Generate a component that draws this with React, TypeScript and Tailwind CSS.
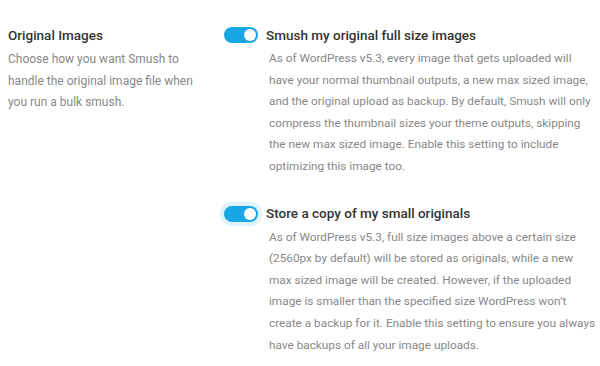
import { useState } from "react";

type ToggleProps = {
    checked: boolean;
    focused?: boolean;
    onChange: () => void;
};

const Toggle = ({ checked, focused, onChange }: ToggleProps) => {
    return (
        <button
            type="button"
            onClick={onChange}
            className={`relative shrink-0 w-[34px] h-[16px] rounded-full ${
                checked ? "bg-[#17a8e3]" : "bg-[#e6e6e6]"
            } ${focused ? "ring-[4px] ring-[#dff3fc]" : ""}`}
        >
            <span
                className={`absolute top-[2px] w-[12px] h-[12px] rounded-full bg-white ${
                    checked ? "left-[20px]" : "left-[2px]"
                }`}
            />
        </button>
    );
};

type OptionProps = {
    title: string;
    lines: string[];
    focused?: boolean;
};

const Option = ({ title, lines, focused }: OptionProps) => {
    const [on, setOn] = useState(true);
    return (
        <div>
            <div className="flex items-center h-[22px]">
                <Toggle checked={on} focused={focused} onChange={() => setOn(!on)} />
                <span className="ml-[8px] text-[13.5px] font-medium text-[#333333]">
                    {title}
                </span>
            </div>
            <p className="mt-[2px] ml-[45px] text-[11.8px] leading-[21.6px] text-[#888888] whitespace-nowrap">
                {lines.map((line, i) => (
                    <span key={i} className="block">
                        {line}
                    </span>
                ))}
            </p>
        </div>
    );
};

export default function App() {
    return (
        <div
            className="flex bg-white w-[600px] h-[366px] pt-[24px] pl-[8px] overflow-hidden"
            style={{ fontFamily: "Roboto, 'Liberation Sans', sans-serif" }}
        >
            <div className="w-[216px] shrink-0">
                <p className="text-[13.5px] leading-[22px] font-medium text-[#333333]">
                    Original Images
                </p>
                <p className="mt-[3px] w-[192px] text-[12px] leading-[21.6px] text-[#888888]">
                    Choose how you want Smush to handle the original image file when
                    you run a bulk smush.
                </p>
            </div>
            <div className="flex-1 flex flex-col gap-[25px]">
                <Option
                    title="Smush my original full size images"
                    lines={[
                        "As of WordPress v5.3, every image that gets uploaded will",
                        "have your normal thumbnail outputs, a new max sized image,",
                        "and the original upload as backup. By default, Smush will only",
                        "compress the thumbnail sizes your theme outputs, skipping",
                        "the new max sized image. Enable this setting to include",
                        "optimizing this image too.",
                    ]}
                />
                <Option
                    focused
                    title="Store a copy of my small originals"
                    lines={[
                        "As of WordPress v5.3, full size images above a certain size",
                        "(2560px by default) will be stored as originals, while a new",
                        "max sized image will be created. However, if the uploaded",
                        "image is smaller than the specified size WordPress won’t",
                        "create a backup for it. Enable this setting to ensure you always",
                        "have backups of all your image uploads.",
                    ]}
                />
            </div>
        </div>
    );
}
